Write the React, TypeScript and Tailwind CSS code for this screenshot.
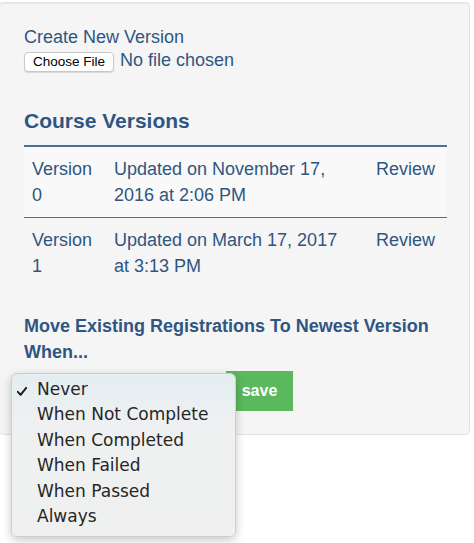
import React from 'react'

const versions = [
  { name: 'Version 0', updated: 'Updated on November 17, 2016 at 2:06 PM' },
  { name: 'Version 1', updated: 'Updated on March 17, 2017 at 3:13 PM' },
]

const options = ['Never', 'When Not Complete', 'When Completed', 'When Failed', 'When Passed', 'Always']

export default function App() {
  return (
    <div className="relative w-[474px] h-[543px] overflow-hidden bg-white font-['Liberation_Sans',Arial,sans-serif] text-[#2f5680]">
      {/* well panel */}
      <div className="mt-[2px] -ml-px w-[471px] rounded-[4px] border border-[#e3e3e3] bg-[#f5f5f5] pl-6 pr-[22px] pt-[21px] pb-[23px] shadow-[inset_0_1px_1px_rgba(0,0,0,0.05)]">
        <div className="text-[18px] leading-[26px]">Create New Version</div>
        <div className="flex items-start">
          <button className="mt-[2px] h-[20px] w-[90px] rounded-[4px] border border-[#c8c8c8] bg-white text-[13.5px] leading-none text-black shadow-[0_1px_1px_rgba(0,0,0,0.12)]">
            Choose File
          </button>
          <span className="ml-[6px] mt-px text-[18px] leading-none">No file chosen</span>
        </div>

        <h2 className="mt-[38px] mb-[14px] text-[21px] font-bold leading-none">Course Versions</h2>

        <table className="w-full border-collapse text-[18px] leading-[26px]">
          <colgroup>
            <col className="w-[82px]" />
            <col className="w-[262px]" />
            <col />
          </colgroup>
          <tbody>
            {versions.map((v, i) => (
              <tr
                key={v.name}
                className={i === 0 ? 'border-t-2 border-[#4f7191] bg-[#f9f9f9]' : 'border-t border-[#4f7191]'}
              >
                <td className="px-2 pt-[9px] pb-[9px] align-top">{v.name}</td>
                <td className="pl-2 pr-[22px] pt-[9px] pb-[9px] align-top">{v.updated}</td>
                <td className="px-2 pt-[9px] pb-[9px] align-top">Review</td>
              </tr>
            ))}
          </tbody>
        </table>

        <div className="mt-[25px] text-[18px] font-bold leading-[26px]">
          Move Existing Registrations To Newest Version When...
        </div>

        <div className="mt-[6px] flex">
          <div className="mr-[6px] mt-[4px] h-[34px] w-[196px] rounded-[4px] border border-[#ccc] bg-white" />
          <button className="h-[40px] w-[67px] bg-[#5cb85c] text-[16px] font-bold text-white">save</button>
        </div>
      </div>

      {/* open select menu */}
      <div className="absolute left-[11px] top-[373px] w-[225px] h-[164px] rounded-[6px] border border-[#cfcfcf] bg-gradient-to-b from-[#e2eef1] via-[#eff0f1] via-30% to-[#f0f0f0] pt-[3px] pb-[7px] shadow-[0_3px_10px_rgba(0,0,0,0.22)] font-['DejaVu_Sans',sans-serif] text-[17px] leading-[25.4px] text-[#262626]">
        {options.map((o, i) => (
          <div key={o} className="relative pl-[25px]">
            {i === 0 && (
              <svg className="absolute left-[5px] top-[10px]" width="10" height="9" viewBox="0 0 10 9">
                <path d="M0.8 4.8 L3.6 7.8 L9.2 0.8" fill="none" stroke="#1a1a1a" strokeWidth="1.9" strokeLinecap="round" strokeLinejoin="round" />
              </svg>
            )}
            {o}
          </div>
        ))}
      </div>
    </div>
  )
}
